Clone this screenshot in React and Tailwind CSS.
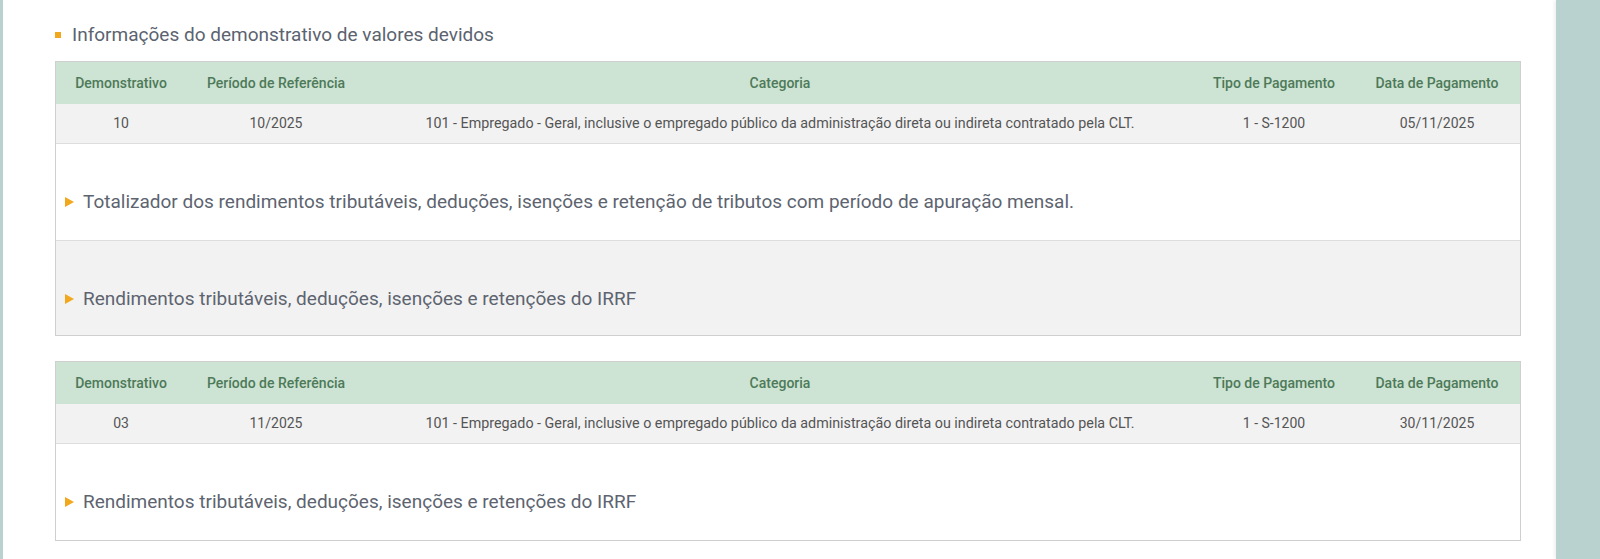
import React from "react";

const TABLES = [
  {
    row: ["10", "10/2025", "101 - Empregado - Geral, inclusive o empregado público da administração direta ou indireta contratado pela CLT.", "1 - S-1200", "05/11/2025"],
    sections: [
      "Totalizador dos rendimentos tributáveis, deduções, isenções e retenção de tributos com período de apuração mensal.",
      "Rendimentos tributáveis, deduções, isenções e retenções do IRRF",
    ],
  },
  {
    row: ["03", "11/2025", "101 - Empregado - Geral, inclusive o empregado público da administração direta ou indireta contratado pela CLT.", "1 - S-1200", "30/11/2025"],
    sections: ["Rendimentos tributáveis, deduções, isenções e retenções do IRRF"],
  },
];

const HEADERS = ["Demonstrativo", "Período de Referência", "Categoria", "Tipo de Pagamento", "Data de Pagamento"];
const WIDTHS = ["w-[130px]", "w-[180px]", "w-[828px]", "w-[160px]", "w-[166px]"];

function Arrow() {
  return (
    <svg width="9" height="10" viewBox="0 0 9 10" className="shrink-0">
      <path d="M0 0 L9 5 L0 10 Z" fill="#f2a81d" />
    </svg>
  );
}

function Demonstrativo({ row, sections }) {
  return (
    <div className="border border-[#cfcfcf]">
      <div className="flex h-[42px] items-center bg-[#cde3d3] text-[14px] font-medium text-[#4d7a59]">
        {HEADERS.map((h, i) => (
          <div key={h} className={`${WIDTHS[i]} shrink-0 text-center`}>{h}</div>
        ))}
      </div>
      <div className="flex h-[40px] items-center border-b border-[#dedede] bg-[#f2f2f2] text-[14px] text-[#555]">
        {row.map((c, i) => (
          <div key={i} className={`${WIDTHS[i]} shrink-0 text-center ${i === 2 ? "text-[14.3px]" : ""}`}>{c}</div>
        ))}
      </div>
      {sections.map((s, i) => (
        <div
          key={i}
          className={`flex items-center gap-[9px] pl-[9px] text-[19px] leading-[24px] text-[#5d6470] ${
            i % 2 === 1 ? "bg-[#f2f2f2] pt-[46px] pb-[24px]" : "bg-white pt-[46px] pb-[26px]"
          } ${i < sections.length - 1 ? "border-b border-[#dedede]" : ""}`}
        >
          <Arrow />
          <span>{s}</span>
        </div>
      ))}
    </div>
  );
}

export default function App() {
  return (
    <div className="flex h-[559px] w-[1600px] overflow-hidden bg-white font-['Roboto',sans-serif]">
      <div className="w-[3px] shrink-0 bg-[#b9d1cf]" />
      <main className="flex-1 pl-[52px] pr-[35px] pt-[23px]">
        <div className="mb-[14px] flex items-center gap-[11px]">
          <span className="h-[6px] w-[6px] bg-[#f2a81d]" />
          <h2 className="text-[19px] leading-[24px] text-[#5b6370]">Informações do demonstrativo de valores devidos</h2>
        </div>
        <div className="flex flex-col gap-[25px]">
          {TABLES.map((t, i) => (
            <Demonstrativo key={i} {...t} />
          ))}
        </div>
      </main>
      <div className="w-[44px] shrink-0 bg-[#b9d1cf] shadow-[-2px_0_3px_rgba(0,0,0,0.06)]" />
    </div>
  );
}
